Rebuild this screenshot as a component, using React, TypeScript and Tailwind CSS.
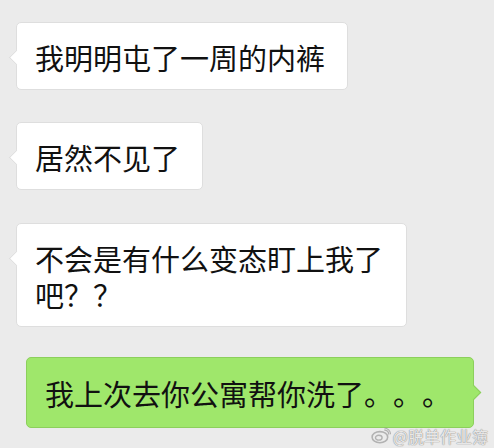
const FONT = { fontFamily: '"Noto Sans CJK SC", "Noto Sans", sans-serif' }

type BubbleProps = {
  text: string
  mine?: boolean
  className?: string
}

function Bubble({ text, mine = false, className = '' }: BubbleProps) {
  const tone = mine
    ? 'bg-[#9fe76b] border-[#8ccf5c] text-[#111] pt-[17px] pb-[16px]'
    : 'bg-white border-[#dedede] text-[#111] pt-[16px] pb-[14px]'

  return (
    <div className={`relative rounded-[5px] border pl-[18px] pr-[22px] text-[29px] leading-[36px] [text-spacing-trim:space-all] ${tone} ${className}`}>
      {/* tail */}
      <span
        className={
          mine
            ? 'absolute -right-[6px] top-[29px] h-[11px] w-[11px] rotate-45 border-t border-r border-[#8ccf5c] bg-[#9fe76b]'
            : 'absolute -left-[6px] top-[29px] h-[11px] w-[11px] rotate-45 border-b border-l border-[#dedede] bg-white'
        }
      />
      <p className="relative">{text}</p>
    </div>
  )
}

function WeiboMark() {
  return (
    <svg width="20" height="17" viewBox="0 0 18 15" className="opacity-70">
      <ellipse cx="8" cy="9" rx="7" ry="5" fill="none" stroke="#9a9a9a" strokeWidth="1.4" />
      <ellipse cx="7" cy="9.5" rx="3" ry="2.2" fill="none" stroke="#9a9a9a" strokeWidth="1.2" />
      <path d="M12 2.5a4 4 0 0 1 4 4" fill="none" stroke="#9a9a9a" strokeWidth="1.3" />
      <path d="M12 0.8a5.8 5.8 0 0 1 5.6 5.6" fill="none" stroke="#9a9a9a" strokeWidth="1" />
    </svg>
  )
}

export default function App() {
  return (
    <div className="relative h-[448px] w-[494px] overflow-hidden bg-[#ebebeb]" style={FONT}>
      <div className="flex flex-col items-start pt-[22px]">
        <Bubble text="我明明屯了一周的内裤" className="ml-4 max-w-[391px]" />
        <Bubble text="居然不见了" className="ml-4 mt-[32px] max-w-[391px]" />
        <Bubble text="不会是有什么变态盯上我了吧？？" className="ml-4 mt-[33px] max-w-[391px]" />
        <Bubble text="我上次去你公寓帮你洗了。。。" mine className="mr-5 mt-[30px] self-end" />
      </div>

      {/* watermark */}
      <div className="absolute bottom-[4px] right-[6px] flex items-center gap-[2px]">
        <WeiboMark />
        <span
          className="text-[16px] leading-none text-white/80"
          style={{ textShadow: '0 0 1px #888, 0 0 1px #888' }}
        >
          @脱单作业簿
        </span>
      </div>
    </div>
  )
}
